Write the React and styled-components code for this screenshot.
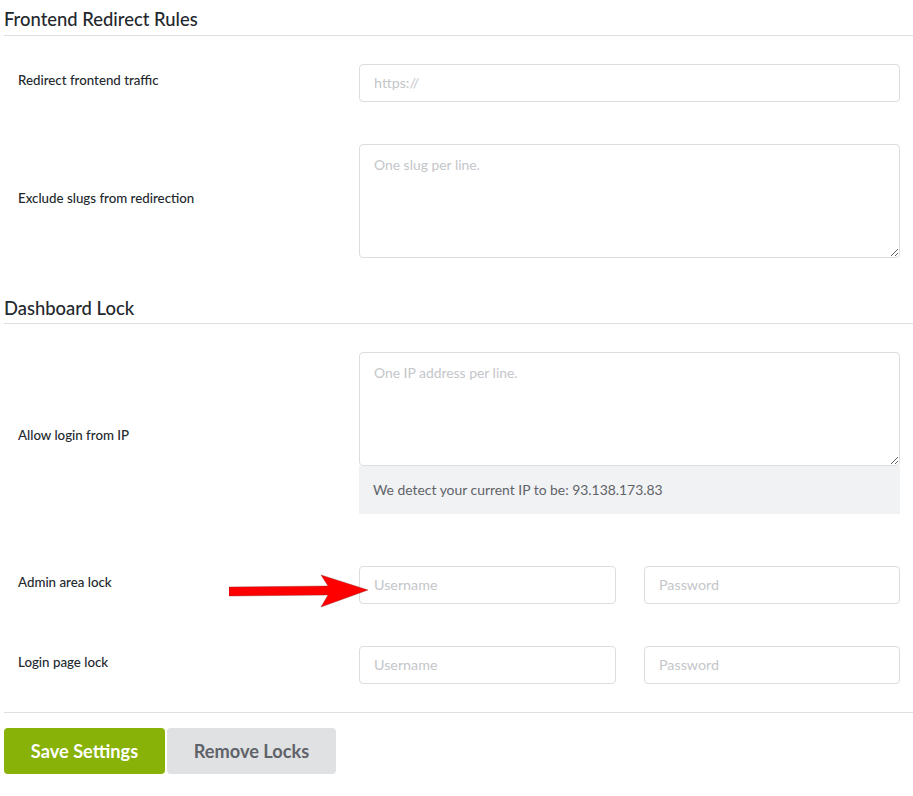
import React from 'react';
import styled, { createGlobalStyle } from 'styled-components';

const GlobalStyle = createGlobalStyle`
  html, body {
    margin: 0;
    padding: 0;
    background: #fff;
  }
  body {
    font-family: Lato, "Liberation Sans", sans-serif;
  }
`;

function App() {
  return (
    <Page>
      <GlobalStyle />
      <Heading>Frontend Redirect Rules</Heading>
      <Row $top={28}>
        <Label>Redirect frontend traffic</Label>
        <TextInput placeholder="https://" />
      </Row>
      <Row $top={42}>
        <Label>Exclude slugs from redirection</Label>
        <TextArea placeholder="One slug per line." />
      </Row>

      <Heading $top={38}>Dashboard Lock</Heading>
      <Row $top={28}>
        <Label $shift={10}>Allow login from IP</Label>
        <FieldStack>
          <TextArea placeholder="One IP address per line." />
          <Note>We detect your current IP to be: 93.138.173.83</Note>
        </FieldStack>
      </Row>
      <Row $top={52}>
        <Label>Admin area lock</Label>
        <Pair>
          <TextInput placeholder="Username" />
          <TextInput placeholder="Password" />
        </Pair>
        <Arrow viewBox="0 0 142 42" aria-hidden="true">
          <path d="M0 17 L99 16 L92 5 L139 20 L92 37 L99 25 L0 26 Z" fill="#fe0000" stroke="#8a2a2a" strokeWidth="0.4" />
        </Arrow>
      </Row>
      <Row $top={42}>
        <Label>Login page lock</Label>
        <Pair>
          <TextInput placeholder="Username" />
          <TextInput placeholder="Password" />
        </Pair>
      </Row>

      <Footer>
        <Button $primary>Save Settings</Button>
        <Button>Remove Locks</Button>
      </Footer>
    </Page>
  );
}

const Page = styled.div`
  width: 913px;
  height: 796px;
  box-sizing: border-box;
  padding: 7px 0 0 4px;
  overflow: hidden;
`;

const Heading = styled.h2`
  margin: ${(p) => p.$top || 0}px 0 0;
  padding-bottom: ${(p) => (p.$top ? 3 : 4)}px;
  height: 24px;
  line-height: 24px;
  box-sizing: content-box;
  font-size: 18.4px;
  font-weight: 500;
  color: #23282d;
  border-bottom: 1px solid #dfdfdf;
`;

const Row = styled.div`
  position: relative;
  display: grid;
  grid-template-columns: 355px 541px;
  align-items: center;
  margin-top: ${(p) => p.$top}px;
`;

const Label = styled.label`
  padding-left: 14px;
  padding-bottom: 6px;
  margin-top: ${(p) => p.$shift || 0}px;
  font-size: 13.3px;
  font-weight: 500;
  color: #23282d;
  line-height: 20px;
`;

const TextInput = styled.input`
  display: block;
  width: 100%;
  min-width: 0;
  height: 38px;
  box-sizing: border-box;
  padding: 0 14px 2px;
  border: 1px solid #dddddd;
  border-radius: 4px;
  background: #fff;
  font-family: inherit;
  font-size: 14.3px;
  color: #32373c;
  &::placeholder {
    color: #c4c6ca;
    opacity: 1;
  }
`;

const TextArea = styled.textarea`
  display: block;
  width: 100%;
  height: 114px;
  box-sizing: border-box;
  padding: 10px 14px;
  border: 1px solid #dddddd;
  border-radius: 4px;
  background: #fff;
  font-family: inherit;
  font-size: 13.9px;
  line-height: 20px;
  &::placeholder {
    color: #c4c6ca;
    opacity: 1;
  }
`;

const FieldStack = styled.div`
  display: flex;
  flex-direction: column;
`;

const Note = styled.div`
  height: 48px;
  line-height: 48px;
  padding: 0 14px;
  background: #f1f2f4;
  font-size: 13.9px;
  color: #5f6369;
`;

const Pair = styled.div`
  display: grid;
  grid-template-columns: 257px 256px;
  column-gap: 28px;
`;

const Arrow = styled.svg`
  position: absolute;
  left: 225px;
  top: 4px;
  width: 142px;
  height: 42px;
`;

const Footer = styled.div`
  display: flex;
  gap: 2px;
  margin-top: 28px;
  padding-top: 15px;
  border-top: 1px solid #dfdfdf;
`;

const Button = styled.button`
  height: 46px;
  width: ${(p) => (p.$primary ? 161 : 169)}px;
  padding: 0;
  border: 0;
  border-radius: 4px;
  background: ${(p) => (p.$primary ? '#88b207' : '#e0e1e3')};
  color: ${(p) => (p.$primary ? '#ffffff' : '#5f6369')};
  font-family: inherit;
  font-size: 18.2px;
  font-weight: 700;
`;

export default App;
